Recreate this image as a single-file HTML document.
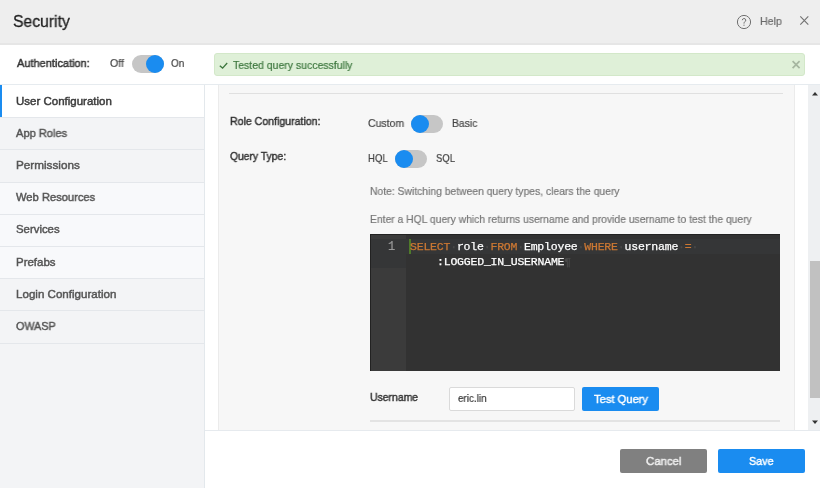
<!DOCTYPE html><html><head><meta charset="utf-8"><style>
*{margin:0;padding:0;box-sizing:border-box}
html,body{width:820px;height:488px;overflow:hidden;background:#fff}
body{position:relative;font-family:"Liberation Sans",sans-serif}
.t{position:absolute;white-space:nowrap;will-change:transform}
.b{position:absolute}
.m{-webkit-text-stroke:0.45px currentColor}
.r{-webkit-text-stroke:0.2px currentColor}
</style></head><body>
<div class="b" style="left:0;top:0;width:820px;height:45px;background:#eeeeee;border-bottom:2px solid #e6e6e6"></div>
<div class="t r" style="left:12.51px;top:12.80px;font-size:16.3px;line-height:16.3px;color:#1e1e1e;transform:scaleX(0.9658);transform-origin:0 0;-webkit-text-stroke:0.3px currentColor;">Security</div>
<svg class="b" style="left:736px;top:14px" width="16" height="16" viewBox="0 0 16 16"><circle cx="8" cy="8" r="6.6" fill="none" stroke="#707070" stroke-width="1"/><path d="M6.3 6.2a1.75 1.75 0 1 1 2.4 1.7c-.45.2-.7.5-.7 1v.7" fill="none" stroke="#707070" stroke-width="1"/><circle cx="8" cy="11.2" r=".6" fill="#707070"/></svg>
<div class="t r" style="left:759.72px;top:15.93px;font-size:11.3px;line-height:11.3px;color:#6a6a6a;transform:scaleX(0.9375);transform-origin:0 0;">Help</div>
<svg class="b" style="left:799px;top:15px" width="11" height="11" viewBox="0 0 11 11"><path d="M1.3 1.3L9.3 9.6M9.3 1.3L1.3 9.6" stroke="#727272" stroke-width="1.1"/></svg>
<div class="b" style="left:0;top:84px;width:820px;height:1px;background:#e6ebef"></div>
<div class="t m" style="left:16.71px;top:57.93px;font-size:11.3px;line-height:11.3px;color:#333;transform:scaleX(0.9741);transform-origin:0 0;">Authentication:</div>
<div class="t r" style="left:109.71px;top:57.69px;font-size:11px;line-height:11px;color:#444;transform:scaleX(0.9583);transform-origin:0 0;">Off</div>
<div class="b" style="left:132px;top:55px;width:32px;height:18px;border-radius:9px;background:#c6c6c6"></div>
<div class="b" style="left:146px;top:55px;width:18px;height:18px;border-radius:50%;background:#1a8cf0"></div>
<div class="t r" style="left:171.43px;top:57.69px;font-size:11px;line-height:11px;color:#444;transform:scaleX(0.9104);transform-origin:0 0;">On</div>
<div class="b" style="left:214px;top:53px;width:591px;height:23px;border-radius:3px;background:#dff0d8;border:1px solid #d3e8c9"></div>
<svg class="b" style="left:219px;top:61px" width="10" height="9" viewBox="0 0 10 9"><path d="M0.8 4.7L3.6 7.1L8.2 2.0" fill="none" stroke="#3c763d" stroke-width="1.3"/></svg>
<div class="t r" style="left:232.61px;top:60.49px;font-size:11px;line-height:11px;color:#3c763d;transform:scaleX(0.9530);transform-origin:0 0;">Tested query successfully</div>
<svg class="b" style="left:791px;top:60px" width="10" height="10" viewBox="0 0 10 10"><path d="M1.6 1.2L8.6 8.2M8.6 1.2L1.6 8.2" stroke="#a6b6a0" stroke-width="1.7"/></svg>
<div class="b" style="left:0;top:85px;width:205px;height:403px;background:#f3f4f6;border-right:1px solid #e3e8ec"></div>
<div class="b" style="left:0;top:85.00px;width:204px;height:32.20px;background:#ffffff"></div>
<div class="b" style="left:0;top:117.20px;width:204px;height:1px;background:#e4e7eb"></div>
<div class="t m" style="left:15.79px;top:95.52px;font-size:11.2px;line-height:11.2px;color:#3a3a3a;transform:scaleX(1.0271);transform-origin:0 0;">User Configuration</div>
<div class="b" style="left:0;top:118.20px;width:204px;height:31.20px;background:#f3f4f6"></div>
<div class="b" style="left:0;top:149.40px;width:204px;height:1px;background:#e4e7eb"></div>
<div class="t m" style="left:15.80px;top:127.72px;font-size:11.2px;line-height:11.2px;color:#555;transform:scaleX(0.9903);transform-origin:0 0;">App Roles</div>
<div class="b" style="left:0;top:150.40px;width:204px;height:31.20px;background:#f3f4f6"></div>
<div class="b" style="left:0;top:181.60px;width:204px;height:1px;background:#e4e7eb"></div>
<div class="t m" style="left:15.79px;top:159.92px;font-size:11.2px;line-height:11.2px;color:#555;transform:scaleX(1.0464);transform-origin:0 0;">Permissions</div>
<div class="b" style="left:0;top:182.60px;width:204px;height:31.20px;background:#f8f9fb"></div>
<div class="b" style="left:0;top:213.80px;width:204px;height:1px;background:#e4e7eb"></div>
<div class="t m" style="left:15.80px;top:192.12px;font-size:11.2px;line-height:11.2px;color:#555;transform:scaleX(0.9974);transform-origin:0 0;">Web Resources</div>
<div class="b" style="left:0;top:214.80px;width:204px;height:31.20px;background:#f8f9fb"></div>
<div class="b" style="left:0;top:246.00px;width:204px;height:1px;background:#e4e7eb"></div>
<div class="t m" style="left:15.80px;top:224.32px;font-size:11.2px;line-height:11.2px;color:#555;transform:scaleX(1.0165);transform-origin:0 0;">Services</div>
<div class="b" style="left:0;top:247.00px;width:204px;height:31.20px;background:#f8f9fb"></div>
<div class="b" style="left:0;top:278.20px;width:204px;height:1px;background:#e4e7eb"></div>
<div class="t m" style="left:15.79px;top:256.52px;font-size:11.2px;line-height:11.2px;color:#555;transform:scaleX(1.0260);transform-origin:0 0;">Prefabs</div>
<div class="b" style="left:0;top:279.20px;width:204px;height:31.20px;background:#f3f4f6"></div>
<div class="b" style="left:0;top:310.40px;width:204px;height:1px;background:#e4e7eb"></div>
<div class="t m" style="left:15.79px;top:288.72px;font-size:11.2px;line-height:11.2px;color:#555;transform:scaleX(1.0353);transform-origin:0 0;">Login Configuration</div>
<div class="b" style="left:0;top:311.40px;width:204px;height:31.20px;background:#f3f4f6"></div>
<div class="b" style="left:0;top:342.60px;width:204px;height:1px;background:#e4e7eb"></div>
<div class="t m" style="left:15.81px;top:320.92px;font-size:11.2px;line-height:11.2px;color:#555;transform:scaleX(0.9629);transform-origin:0 0;">OWASP</div>
<div class="b" style="left:0;top:85px;width:2px;height:32px;background:#1a8cf0"></div>
<div class="b" style="left:218px;top:85px;width:577px;height:345px;background:#f7f7f7;border-left:1px solid #ebebeb;border-right:1px solid #ebebeb"></div>
<div class="b" style="left:229px;top:93px;width:554px;height:1px;background:#e0e0e0"></div>
<div class="t m" style="left:229.72px;top:116.03px;font-size:11.3px;line-height:11.3px;color:#333;transform:scaleX(0.9361);transform-origin:0 0;">Role Configuration:</div>
<div class="t m" style="left:229.73px;top:151.43px;font-size:11.3px;line-height:11.3px;color:#333;transform:scaleX(0.9139);transform-origin:0 0;">Query Type:</div>
<div class="t r" style="left:368.41px;top:117.89px;font-size:11px;line-height:11px;color:#444;transform:scaleX(0.9545);transform-origin:0 0;">Custom</div>
<div class="b" style="left:411px;top:115px;width:32px;height:18px;border-radius:9px;background:#c6c6c6"></div>
<div class="b" style="left:411px;top:115px;width:18px;height:18px;border-radius:50%;background:#1a8cf0"></div>
<div class="t r" style="left:451.92px;top:117.89px;font-size:11px;line-height:11px;color:#444;transform:scaleX(0.9394);transform-origin:0 0;">Basic</div>
<div class="t r" style="left:368.44px;top:152.69px;font-size:11px;line-height:11px;color:#444;transform:scaleX(0.8705);transform-origin:0 0;">HQL</div>
<div class="b" style="left:395px;top:150px;width:32px;height:18px;border-radius:9px;background:#c6c6c6"></div>
<div class="b" style="left:395px;top:150px;width:18px;height:18px;border-radius:50%;background:#1a8cf0"></div>
<div class="t r" style="left:435.54px;top:152.69px;font-size:11px;line-height:11px;color:#444;transform:scaleX(0.8645);transform-origin:0 0;">SQL</div>
<div class="t r" style="left:369.75px;top:186.00px;font-size:11.1px;line-height:11.1px;color:#777;transform:scaleX(0.9323);transform-origin:0 0;">Note: Switching between query types, clears the query</div>
<div class="t r" style="left:369.75px;top:214.10px;font-size:11.1px;line-height:11.1px;color:#777;transform:scaleX(0.9319);transform-origin:0 0;">Enter a HQL query which returns username and provide username to test the query</div>
<div class="b" style="left:370px;top:234px;width:410px;height:137px;background:#323232;border-top:1px solid #222;border-left:1px solid #222"></div>
<div class="b" style="left:371px;top:235px;width:35px;height:136px;background:#3b3b3b"></div>
<div class="b" style="left:371px;top:239px;width:35px;height:29px;background:#353637"></div>
<div class="b" style="left:406px;top:239px;width:374px;height:15px;background:#353637"></div>
<div class="b" style="left:409px;top:239px;width:2px;height:15px;background:#4f7a2a"></div>
<div class="t r" style="left:388.00px;top:241.34px;font-size:12px;line-height:12px;color:#999;font-family:'Liberation Mono',monospace;">1</div>
<div class="t r" style="left:410.00px;top:241.27px;font-size:11.5px;line-height:11.5px;color:#fff;font-family:'Liberation Mono',monospace;letter-spacing:-0.2px;-webkit-text-stroke:0.25px currentColor;"><span style="color:#CC7833">SELECT</span><span style="color:#4a4a4a">·</span>role<span style="color:#4a4a4a">·</span><span style="color:#CC7833">FROM</span><span style="color:#4a4a4a">·</span>Employee<span style="color:#4a4a4a">·</span><span style="color:#CC7833">WHERE</span><span style="color:#4a4a4a">·</span>username<span style="color:#4a4a4a">·</span><span style="color:#CC7833">=</span><span style="color:#4a4a4a">·</span></div>
<div class="t r" style="left:436.80px;top:255.77px;font-size:11.5px;line-height:11.5px;color:#fff;font-family:'Liberation Mono',monospace;letter-spacing:-0.2px;-webkit-text-stroke:0.25px currentColor;">:LOGGED_IN_USERNAME<span style="color:#4a4a4a">¶</span></div>
<div class="t m" style="left:369.72px;top:392.13px;font-size:11.3px;line-height:11.3px;color:#333;transform:scaleX(0.9222);transform-origin:0 0;">Username</div>
<div class="b" style="left:449px;top:387px;width:126px;height:24px;background:#fff;border:1px solid #dadada;border-radius:2px"></div>
<div class="t r" style="left:457.68px;top:393.49px;font-size:11px;line-height:11px;color:#333;transform:scaleX(0.8981);transform-origin:0 0;">eric.lin</div>
<div class="b" style="left:582px;top:387px;width:77px;height:24px;background:#1a8cf0;border-radius:2px"></div>
<div class="t m" style="left:593.91px;top:393.77px;font-size:11.5px;line-height:11.5px;color:#fff;transform:scaleX(0.9711);transform-origin:0 0;">Test Query</div>
<div class="b" style="left:370px;top:420px;width:410px;height:2px;background:#e3e3e3"></div>
<div class="b" style="left:808px;top:85px;width:12px;height:345px;background:#eef0f2"></div>
<div class="b" style="left:810px;top:261px;width:10px;height:137px;background:#c1c1c1"></div>
<svg class="b" style="left:811px;top:91px" width="8" height="5" viewBox="0 0 8 5"><path d="M1 4.5L4 1L7 4.5Z" fill="#333"/></svg>
<svg class="b" style="left:811px;top:420px" width="8" height="5" viewBox="0 0 8 5"><path d="M1 0.5L4 4L7 0.5Z" fill="#333"/></svg>
<div class="b" style="left:205px;top:430px;width:615px;height:1px;background:#e6eaee"></div>
<div class="b" style="left:620px;top:449px;width:87px;height:24px;background:#808080;border-radius:2px"></div>
<div class="t m" style="left:645.61px;top:454.90px;font-size:11.7px;line-height:11.7px;color:#f0f0f0;transform:scaleX(0.9746);transform-origin:0 0;">Cancel</div>
<div class="b" style="left:718px;top:449px;width:87px;height:24px;background:#1a8cf0;border-radius:2px"></div>
<div class="t m" style="left:748.86px;top:454.90px;font-size:11.7px;line-height:11.7px;color:#fff;transform:scaleX(0.9205);transform-origin:0 0;">Save</div>
</body></html>
